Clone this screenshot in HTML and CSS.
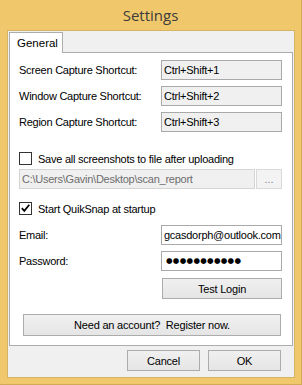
FILE: index.html
```html
<!DOCTYPE html>
<html>
<head>
<meta charset="utf-8">
<link rel="stylesheet" href="styles.css">
</head>
<body>
<div class="window">
  <div class="titlebar">Settings</div>
  <div class="client">
    <div class="tabs"><div class="tab">General</div></div>
    <div class="panel">
      <div class="row"><span class="label">Screen Capture Shortcut:</span><div class="field readonly">Ctrl+Shift+1</div></div>
      <div class="row mt6"><span class="label">Window Capture Shortcut:</span><div class="field readonly">Ctrl+Shift+2</div></div>
      <div class="row mt6"><span class="label">Region Capture Shortcut:</span><div class="field readonly">Ctrl+Shift+3</div></div>
      <div class="check check-save"><span class="box"></span><span class="check-text">Save all screenshots to file after uploading</span></div>
      <div class="pathrow"><div class="field disabled path">C:\Users\Gavin\Desktop\scan_report</div><div class="browse">...</div></div>
      <div class="check check-start"><span class="box"><svg class="tick" viewBox="0 0 11 11" width="11" height="11"><path d="M1.8 5.2 L4.3 7.9 L9.3 1.8" fill="none" stroke="#000" stroke-width="1.7"/></svg></span><span class="check-text">Start QuikSnap at startup</span></div>
      <div class="row row-email"><span class="label">Email:</span><div class="field">gcasdorph@outlook.com</div></div>
      <div class="row mt6"><span class="label">Password:</span><div class="field pw">●●●●●●●●●●●</div></div>
      <div class="btnrow"><button class="btn test">Test Login</button></div>
      <button class="btn register">Need an account?&nbsp; Register now.</button>
    </div>
    <div class="footer"><button class="btn dlg">Cancel</button><button class="btn dlg">OK</button></div>
  </div>
</div>
</body>
</html>
```
FILE: styles.css
```css
html, body {
  margin: 0;
  padding: 0;
}
body {
  width: 302px;
  height: 385px;
  overflow: hidden;
  font-family: "Liberation Sans", Arial, sans-serif;
  font-size: 11px;
  color: #000;
}
.window {
  box-sizing: border-box;
  width: 302px;
  height: 385px;
  background: #f0c86b;
  border-right: 1px solid #d2a954;
  border-bottom: 1px solid #d2a954;
  display: flex;
  flex-direction: column;
}
.titlebar {
  height: 30px;
  line-height: 30px;
  text-align: center;
  font-family: "Open Sans", "Noto Sans", sans-serif;
  font-size: 15px;
  color: #3c3c3c;
}
.client {
  box-sizing: border-box;
  margin-left: 7px;
  width: 288px;
  height: 348px;
  border: 1px solid #d6b466;
  background: #f0f0f0;
  padding: 1px 1px 0 1px;
  display: flex;
  flex-direction: column;
}
.tabs {
  display: flex;
  height: 20px;
  position: relative;
  z-index: 1;
}
.tab {
  box-sizing: border-box;
  width: 54px;
  height: 21px;
  background: #fff;
  border: 1px solid #acacac;
  border-bottom: none;
  padding-left: 7px;
  line-height: 20px;
  font-size: 11.5px;
}
.panel {
  box-sizing: border-box;
  height: 294px;
  background: #fff;
  border: 1px solid #acacac;
  padding: 7px 10px 0 9px;
  display: flex;
  flex-direction: column;
  letter-spacing: -0.25px;
}
.row {
  display: flex;
  align-items: center;
  height: 20px;
}
.mt6 { margin-top: 6px; }
.label {
  width: 142px;
  flex: none;
}
.field {
  box-sizing: border-box;
  width: 121px;
  height: 20px;
  border: 1px solid #a9a9a9;
  background: #fff;
  padding: 0 2px;
  line-height: 18px;
  white-space: nowrap;
  overflow: hidden;
}
.field.readonly {
  background: #f0f0f0;
}
.field.disabled {
  background: #f0f0f0;
  border-color: #d4d4d4;
  color: #6d6d6d;
}
.check {
  display: flex;
  align-items: center;
  height: 13px;
}
.check-save { margin-top: 20px; }
.check-start { margin-top: 13px; }
.box {
  box-sizing: border-box;
  width: 13px;
  height: 13px;
  border: 1px solid #333;
  background: #fff;
  flex: none;
  display: flex;
}
.tick { display: block; }
.check-text {
  margin-left: 6px;
}
.pathrow {
  display: flex;
  margin-top: 4px;
  height: 20px;
}
.field.path {
  width: 236px;
}
.browse {
  box-sizing: border-box;
  width: 26px;
  height: 20px;
  margin-left: 1px;
  border: 1px solid #d9d9d9;
  background: #f3f3f3;
  color: #838383;
  text-align: center;
  line-height: 18px;
  letter-spacing: 0;
}
.row-email { margin-top: 10px; }
.pw {
  font-family: "DejaVu Sans", sans-serif;
  font-size: 7.5px;
  letter-spacing: 0.3px;
  padding-left: 4px;
}
.btnrow {
  display: flex;
  justify-content: flex-end;
  margin-top: 7px;
}
.btn {
  box-sizing: border-box;
  margin: 0;
  padding: 0;
  border: 1px solid #acacac;
  background: linear-gradient(#f0f0f0, #e5e5e5);
  font-family: "Liberation Sans", Arial, sans-serif;
  font-size: 11px;
  letter-spacing: -0.2px;
  color: #000;
}
.btn.test {
  width: 120px;
  height: 21px;
}
.btn.register {
  width: 258px;
  height: 22px;
  margin-top: 15px;
  margin-left: 4px;
}
.footer {
  display: flex;
  justify-content: flex-end;
  gap: 8px;
  margin-top: 4px;
  padding-right: 12px;
}
.btn.dlg {
  width: 73px;
  height: 21px;
}
```
